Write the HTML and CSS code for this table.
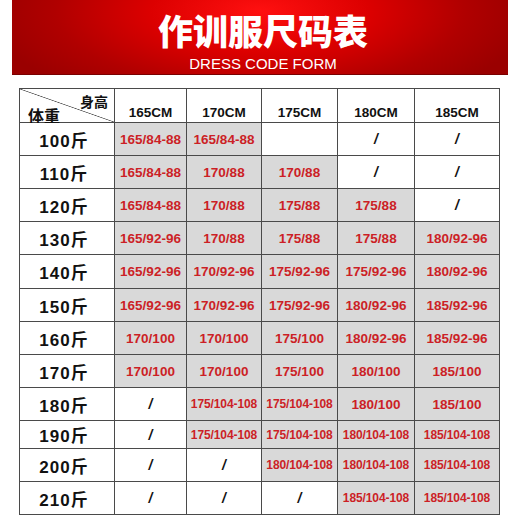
FILE: index.html
```html
<!DOCTYPE html>
<html lang="zh">
<head>
<meta charset="utf-8">
<title>作训服尺码表</title>
<link rel="stylesheet" href="styles.css">
</head>
<body>
<header class="banner">
  <h1 class="title">作训服尺码表</h1>
  <p class="subtitle">DRESS CODE FORM</p>
</header>
<div class="chart">
  <div class="cell corner"><span class="c-h">身高</span><span class="c-w">体重</span></div>
  <div class="cell head">165CM</div>
  <div class="cell head">170CM</div>
  <div class="cell head">175CM</div>
  <div class="cell head">180CM</div>
  <div class="cell head">185CM</div>

  <div class="cell label">100斤</div>
  <div class="cell g">165/84-88</div>
  <div class="cell g">165/84-88</div>
  <div class="cell"></div>
  <div class="cell na">/</div>
  <div class="cell na">/</div>

  <div class="cell label">110斤</div>
  <div class="cell g">165/84-88</div>
  <div class="cell g">170/88</div>
  <div class="cell g">170/88</div>
  <div class="cell na">/</div>
  <div class="cell na">/</div>

  <div class="cell label">120斤</div>
  <div class="cell g">165/84-88</div>
  <div class="cell g">170/88</div>
  <div class="cell g">175/88</div>
  <div class="cell g">175/88</div>
  <div class="cell na">/</div>

  <div class="cell label">130斤</div>
  <div class="cell g">165/92-96</div>
  <div class="cell g">170/88</div>
  <div class="cell g">175/88</div>
  <div class="cell g">175/88</div>
  <div class="cell g">180/92-96</div>

  <div class="cell label">140斤</div>
  <div class="cell g">165/92-96</div>
  <div class="cell g">170/92-96</div>
  <div class="cell g">175/92-96</div>
  <div class="cell g">175/92-96</div>
  <div class="cell g">180/92-96</div>

  <div class="cell label">150斤</div>
  <div class="cell g">165/92-96</div>
  <div class="cell g">170/92-96</div>
  <div class="cell g">175/92-96</div>
  <div class="cell g">180/92-96</div>
  <div class="cell g">185/92-96</div>

  <div class="cell label">160斤</div>
  <div class="cell g">170/100</div>
  <div class="cell g">170/100</div>
  <div class="cell g">175/100</div>
  <div class="cell g">180/92-96</div>
  <div class="cell g">185/92-96</div>

  <div class="cell label">170斤</div>
  <div class="cell g">170/100</div>
  <div class="cell g">170/100</div>
  <div class="cell g">175/100</div>
  <div class="cell g">180/100</div>
  <div class="cell g">185/100</div>

  <div class="cell label">180斤</div>
  <div class="cell na">/</div>
  <div class="cell g sm">175/104-108</div>
  <div class="cell g sm">175/104-108</div>
  <div class="cell g">180/100</div>
  <div class="cell g">185/100</div>

  <div class="cell label">190斤</div>
  <div class="cell na">/</div>
  <div class="cell g sm">175/104-108</div>
  <div class="cell g sm">175/104-108</div>
  <div class="cell g sm">180/104-108</div>
  <div class="cell g sm">185/104-108</div>

  <div class="cell label">200斤</div>
  <div class="cell na">/</div>
  <div class="cell na">/</div>
  <div class="cell g sm">180/104-108</div>
  <div class="cell g sm">180/104-108</div>
  <div class="cell g sm">185/104-108</div>

  <div class="cell label">210斤</div>
  <div class="cell na">/</div>
  <div class="cell na">/</div>
  <div class="cell na">/</div>
  <div class="cell g sm">185/104-108</div>
  <div class="cell g sm">185/104-108</div>
</div>
</body>
</html>
```
FILE: styles.css
```css
html, body {
  margin: 0;
  padding: 0;
  background: #ffffff;
}
body {
  font-family: "Liberation Sans", Arial, "Noto Sans CJK SC", sans-serif;
}
.banner {
  margin: 0 12px;
  height: 75px;
  box-sizing: border-box;
  padding-top: 9px;
  background:
    radial-gradient(ellipse 55% 140% at 50% 15%, #ff1010 0%, #dc0000 40%, #b00000 75%, #9a0000 100%);
  border-bottom: 1px solid #7a0000;
  color: #ffffff;
  text-align: center;
}
.title {
  margin: 0;
  font-family: "Noto Sans CJK SC", sans-serif;
  font-weight: 900;
  font-size: 35px;
  line-height: 42px;
  letter-spacing: 0;
  padding-left: 6px;
}
.subtitle {
  margin: 4px 0 0;
  font-family: "Liberation Sans", Arial, sans-serif;
  font-size: 15px;
  line-height: 17px;
  letter-spacing: 0;
  padding-left: 6px;
}
.chart {
  margin: 13px 0 0 19px;
  width: 481px;
  box-sizing: border-box;
  display: grid;
  grid-template-columns: 94px 71px 74px 75px 76px 84px;
  grid-template-rows: 33px 32px 32px 32px 32px 33px 32px 32px 32px 32px 27px 32px 32px;
  gap: 1px;
  padding: 1px;
  background: #4a4a4a;
}
.cell {
  background: #ffffff;
  display: flex;
  align-items: center;
  justify-content: center;
  font-weight: bold;
  white-space: nowrap;
}
.g {
  background: #d9d9d9;
  color: #cc1f26;
  font-size: 13.5px;
}
.sm {
  font-size: 12px;
  letter-spacing: -0.1px;
}
.na {
  color: #111111;
  font-size: 14px;
  font-style: italic;
}
.label {
  color: #111111;
  font-size: 17px;
  letter-spacing: 1px;
  padding-right: 6px;
}
.head {
  color: #111111;
  font-size: 13.5px;
  align-items: flex-start;
  padding-top: 16px;
  box-sizing: border-box;
}
.corner {
  flex-direction: column;
  align-items: stretch;
  justify-content: flex-start;
  padding: 5px 6px 0 8px;
  box-sizing: border-box;
  color: #111111;
  font-family: "Noto Sans CJK SC", sans-serif;
  background:
    linear-gradient(to top right, transparent calc(50% - 0.7px), #555555 50%, transparent calc(50% + 0.7px)),
    #ffffff;
}
.c-h {
  align-self: flex-end;
  font-size: 14px;
  line-height: 15px;
}
.c-w {
  align-self: flex-start;
  font-size: 16px;
  line-height: 17px;
  margin-top: -2px;
}
```
